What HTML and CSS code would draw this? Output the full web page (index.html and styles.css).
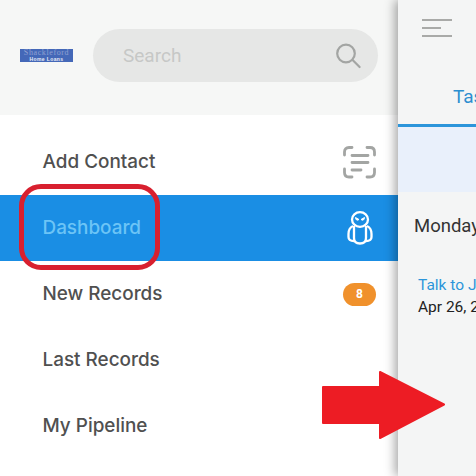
FILE: index.html
```html
<!DOCTYPE html>
<html lang="en">
<head>
    <meta charset="UTF-8">
    <meta name="viewport" content="width=device-width, initial-scale=1.0">
    <title>Dashboard</title>
    <link rel="stylesheet" href="styles.css">
</head>
<body>
    <div class="screen">
        <div class="sidebar">
            <div class="side-header">
                <div class="logo">
                    <span class="logo-name">Shackleford</span>
                    <span class="logo-sub">Home Loans</span>
                </div>
                <div class="search">
                    <span class="search-text">Search</span>
                    <svg class="search-icon" width="28" height="28" viewBox="0 0 28 28" fill="none" stroke="#a3a5a3" stroke-width="2.2" stroke-linecap="round">
                        <circle cx="12" cy="11.5" r="8.8"/>
                        <path d="M18.6 18l7 7"/>
                    </svg>
                </div>
            </div>
            <div class="menu">
                <div class="menu-row">
                    <span>Add Contact</span>
                    <svg class="row-icon" width="33" height="33" viewBox="0 0 33 33" fill="none" stroke="#a3a5a3" stroke-width="2.8" stroke-linecap="round">
                        <path d="M9 1.500H6Q1.500 1.500 1.500 6V9"/>
                        <path d="M24 1.500H27Q31.500 1.500 31.500 6V9"/>
                        <path d="M1.500 23V26.500Q1.500 31 6 31H9"/>
                        <path d="M31.500 23V26.500Q31.500 31 27 31H24"/>
                        <path d="M9 9.500H25M9 16.500H25M9 24H18"/>
                    </svg>
                </div>
                <div class="menu-row active">
                    <span>Dashboard</span>
                    <svg class="row-icon" width="26" height="34" viewBox="0 0 26 34" fill="none" stroke="#fff" stroke-width="2.3">
                        <ellipse cx="13" cy="8.500" rx="8" ry="7.300"/>
                        <path d="M7 15V27Q7 32.500 13 32.500T19 27V15"/>
                        <path d="M6 15Q1.500 17 1.500 23V26Q1.500 30 7 30M20 15Q24.500 17 24.500 23V26Q24.500 30 19 30"/>
                        <path d="M8.500 6.500L12 8.500Q9 10.500 8.500 6.500ZM17.500 6.500L14 8.500Q17 10.500 17.500 6.500Z" fill="#fff" stroke-width="1"/>
                    </svg>
                </div>
                <div class="menu-row">
                    <span>New Records</span>
                    <span class="badge">8</span>
                </div>
                <div class="menu-row"><span>Last Records</span></div>
                <div class="menu-row"><span>My Pipeline</span></div>
            </div>
        </div>

        <div class="panel">
            <div class="panel-top">
                <div class="burger">
                    <i class="bar-long"></i>
                    <i class="bar-short"></i>
                    <i class="bar-long"></i>
                </div>
                <div class="tab">Tasks</div>
            </div>
            <div class="band"></div>
            <div class="day">Monday, April 26</div>
            <div class="task">
                <div class="task-title">Talk to John</div>
                <div class="task-date">Apr 26, 2021</div>
            </div>
        </div>

        <!-- marcas rojas encima de la captura -->
        <div class="circle-mark"></div>
        <svg class="arrow-mark" width="124" height="68" viewBox="0 0 124 68">
            <path d="M2 16H59V1L123 33.500L59 67V52H2Z" fill="#ed1c24" stroke="#ed1c24" stroke-width="2" stroke-linejoin="round"/>
        </svg>
    </div>
</body>
</html>
```

FILE: styles.css
```css
body {
    margin: 0;
    font-family: Roboto, sans-serif;
    background-color: #fff;
}
.screen {
    position: relative;
    display: flex;
    width: 476px;
    height: 476px;
    overflow: hidden;
}
.sidebar {
    flex: 0 0 398px;
    background: #fff;
}
.side-header {
    display: flex;
    align-items: center;
    height: 115px;
    padding: 0 20px 4px;
    box-sizing: border-box;
    background-color: #f6f7f6;
}
.logo {
    display: flex;
    flex-direction: column;
    align-items: center;
    width: 53px;
    height: 13px;
    margin-right: 20px;
    background-color: #4468b8;
    overflow: hidden;
    line-height: 1;
}
.logo-name {
    font-family: "Liberation Serif", serif;
    font-size: 8px;
    letter-spacing: 0.6px;
    color: #8fa0d2;
}
.logo-sub {
    font-family: "Liberation Sans", sans-serif;
    font-size: 5px;
    font-weight: 700;
    letter-spacing: 0.4px;
    color: #e8ecf6;
}
.search {
    flex: 1;
    display: flex;
    align-items: center;
    justify-content: space-between;
    height: 53px;
    padding: 0 16px 0 30px;
    border-radius: 27px;
    background-color: #e6e7e6;
}
.search-text {
    font-size: 19px;
    color: #c6c8c6;
}
.menu {
    padding-top: 14px;
}
.menu-row {
    display: flex;
    align-items: center;
    justify-content: space-between;
    height: 66px;
    padding: 0 22px 0 42.5px;
    font-family: Inter, sans-serif;
    font-size: 18.9px;
    font-weight: 500;
    color: #505050;
}
.menu-row span:first-child {
    margin-top: -2px;
}
.active {
    background-color: #1a8ee4;
    color: #6cc4f6;
}
.active .row-icon {
    margin-right: 3px;
}
.badge {
    width: 33px;
    height: 23px;
    border-radius: 12px;
    background-color: #f0912c;
    color: #fff;
    font-family: Roboto, sans-serif;
    font-size: 12px;
    font-weight: 700;
    line-height: 23px;
    text-align: center;
}
.panel {
    position: relative;
    flex: 1;
    background-color: #f4f5f5;
    box-shadow: -3px 0 10px rgba(0, 0, 0, 0.35);
    white-space: nowrap;
}
.panel-top {
    height: 127px;
    box-sizing: border-box;
    padding: 19px 0 0 24px;
    border-bottom: 3px solid #2c95da;
}
.burger i {
    display: block;
    height: 2px;
    margin-bottom: 6px;
    background-color: #a9aaa8;
}
.bar-long {
    width: 30px;
}
.bar-short {
    width: 19px;
}
.tab {
    margin: 48px 0 0 31px;
    font-size: 19px;
    color: #2c8fd0;
}
.band {
    height: 65px;
    background-color: #e9f0fb;
}
.day {
    padding: 23px 0 0 16px;
    font-size: 18.5px;
    color: #333;
}
.task {
    padding: 37px 0 0 20px;
    font-size: 15.5px;
    line-height: 22px;
}
.task-title {
    color: #2c95da;
}
.task-date {
    color: #222;
}
.circle-mark {
    position: absolute;
    left: 19px;
    top: 184px;
    width: 141px;
    height: 86px;
    box-sizing: border-box;
    border: 5px solid #d8202f;
    border-radius: 22px;
}
.arrow-mark {
    position: absolute;
    left: 321px;
    top: 371px;
}
```
